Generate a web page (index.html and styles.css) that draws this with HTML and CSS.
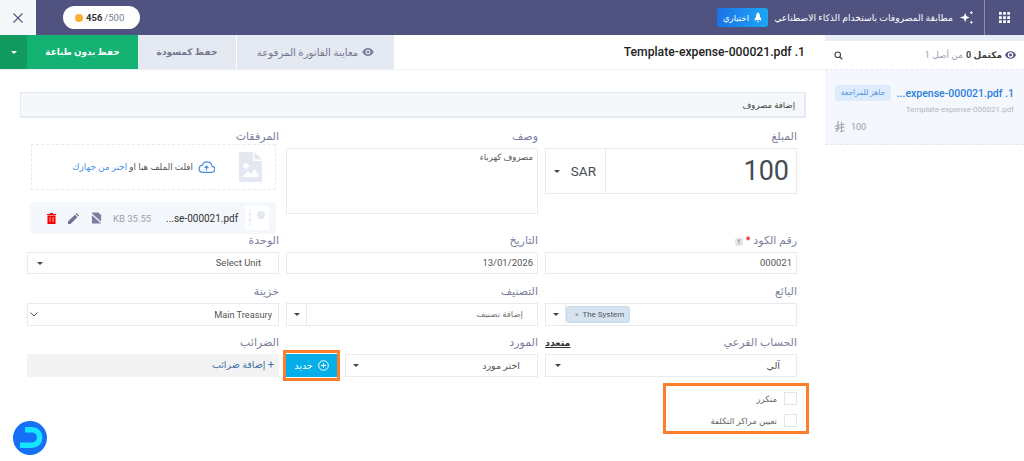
FILE: index.html
```html
<!DOCTYPE html>
<html lang="ar">
<head>
<meta charset="utf-8">
<title>مطابقة المصروفات</title>
<link rel="stylesheet" href="styles.css">
</head>
<body>
<header class="topbar">
  <button class="close-btn" aria-label="close"><svg width="10" height="10" viewBox="0 0 10 10"><path d="M.5.500l9 9M9.500.500l-9 9" stroke="#50527f" stroke-width="1.100" fill="none"/></svg></button>
  <div class="credits"><span class="coin"></span><b>456</b><span class="credits-max">/500</span></div>
  <div class="top-spacer"></div>
  <div class="beta"><span>اختياري</span><svg width="8" height="11" viewBox="0 0 10 13"><path d="M5 0c2 1.500 2.600 3.500 2.600 6l1.400 2v2.500L7 9.500H3L1 10.500V8l1.400-2C2.400 3.500 3 1.500 5 0zM3.800 10.500h2.400L5 13z" fill="#fff"/></svg></div>
  <div class="top-title">مطابقة المصروفات باستخدام الذكاء الاصطناعي</div>
  <svg class="sparkle" width="15" height="15" viewBox="0 0 17 17"><path d="M7 3.500l1.500 3.500L12 8.500 8.500 10 7 14l-1.500-4L1 8.500 5.500 7z" fill="#fff"/><path d="M14 1l.7 1.300L16 3l-1.300.7L14 5l-.7-1.300L12 3l1.300-.7zM14 12l.7 1.300L16 14l-1.300.7L14 16l-.7-1.300L12 14l1.300-.7z" fill="#fff"/></svg>
  <div class="apps"><svg width="11" height="11" viewBox="0 0 12 12" fill="#fff"><path d="M0 0h3v3H0zM4.500 0h3v3h-3zM9 0h3v3H9zM0 4.500h3v3H0zM4.500 4.500h3v3h-3zM9 4.500h3v3H9zM0 9h3v3H0zM4.500 9h3v3h-3zM9 9h3v3H9z"/></svg></div>
</header>

<div class="layout">
  <main class="content">
    <div class="toolbar">
      <button class="btn-caret"><i class="caret caret-white"></i></button>
      <button class="btn-save">حفظ بدون طباعة</button>
      <button class="btn-draft">حفظ كمسودة</button>
      <button class="btn-preview"><span>معاينة الفاتورة المرفوعة</span><svg width="12" height="8" viewBox="0 0 13 9"><path d="M6.500 0C3.500 0 1.200 1.900 0 4.500 1.200 7.100 3.500 9 6.500 9S11.800 7.100 13 4.500C11.800 1.900 9.500 0 6.500 0zm0 7.300a2.800 2.800 0 1 1 0-5.600 2.800 2.800 0 0 1 0 5.600zm0-4.300a1.500 1.500 0 1 0 0 3 1.500 1.500 0 0 0 0-3z" fill="#7b7e9d"/></svg></button>
      <h1 class="doc-title" dir="rtl">1. Template-expense-000021.pdf</h1>
    </div>

    <div class="panel-head">إضافة مصروف</div>

    <form class="form-grid" dir="rtl">
      <div class="field">
        <label>المبلغ</label>
        <div class="amount">
          <div class="amount-value">100</div>
          <div class="amount-cur"><span>SAR</span><i class="caret"></i></div>
        </div>
      </div>
      <div class="field">
        <label>وصف</label>
        <div class="textarea">مصروف كهرباء</div>
      </div>
      <div class="field">
        <label class="label-tight">المرفقات</label>
        <div class="upload">
          <svg class="file-img" width="23" height="30" viewBox="0 0 23 30"><path d="M0 0h14v9h9v21H0z" fill="#e3e8f1"/><path d="M15.500 0L23 7.500h-7.500z" fill="#e3e8f1"/><circle cx="7" cy="14" r="2.800" fill="#fff"/><path d="M3 25l6-6 3 3 4-5 4 8z" fill="#fff"/></svg>
          <svg class="cloud" width="17" height="12" viewBox="0 0 17 12"><path d="M4 11.300h9.500a3 3 0 0 0 .5-6A5 5 0 0 0 4.300 4.200 3.600 3.600 0 0 0 4 11.300zM8.500 9.500V5M6.500 7l2-2 2 2" fill="none" stroke="#4d8fdf" stroke-width="1.200"/></svg>
          <span class="drop-text">افلت الملف هنا او <a>اختر من جهازك</a></span>
        </div>
        <div class="file-row">
          <div class="file-thumb"><svg width="20" height="18" viewBox="0 0 20 18"><path d="M3 1v16M1 5h4M1 11h4" stroke="#e3e8f1" fill="none"/><circle cx="14" cy="6" r="4" fill="#e3e8f1"/></svg></div>
          <span class="file-name" dir="ltr">...se-000021.pdf</span>
          <span class="file-size" dir="ltr">KB 35.55</span>
          <svg class="file-ico" width="11" height="12" viewBox="0 0 12 12"><path d="M1 0h7l3 3v9H1z" fill="#7b7e9d"/><path d="M0 1l12 11" stroke="#f4f7fb" stroke-width="1.500"/></svg>
          <svg class="file-ico" width="11" height="11" viewBox="0 0 12 12"><path d="M0 12V9.300L7.500 1.800l2.700 2.700L2.700 12zM8.300 1l1-1L12 2.700l-1 1z" fill="#6d7196"/></svg>
          <svg class="file-ico" width="9" height="11" viewBox="0 0 9 11"><path d="M0 1h9v1H0zM3 0h3v1H3zM.5 2.500h8V11h-8z" fill="#f40000"/><path d="M3 4v5M6 4v5" stroke="#ffb0b0"/></svg>
        </div>
      </div>

      <div class="field">
        <label>رقم الكود <em>*</em> <span class="hint">؟</span></label>
        <div class="input">000021</div>
      </div>
      <div class="field">
        <label>التاريخ</label>
        <div class="input">13/01/2026</div>
      </div>
      <div class="field">
        <label>الوحدة</label>
        <div class="input input-select pad-unit"><span dir="ltr">Select Unit</span><i class="caret"></i></div>
      </div>

      <div class="field">
        <label>البائع</label>
        <div class="input tall vendor">
          <div class="tag-wrap"><span class="tag" dir="ltr"><small>×</small> The System</span></div>
          <div class="addon"><i class="caret"></i></div>
        </div>
      </div>
      <div class="field">
        <label>التصنيف</label>
        <div class="input tall vendor">
          <div class="placeholder">إضافة تصنيف</div>
          <div class="addon"><i class="caret"></i></div>
        </div>
      </div>
      <div class="field">
        <label>خزينة</label>
        <div class="input tall input-select pad-treasury"><span dir="ltr">Main Treasury</span><svg width="8" height="5" viewBox="0 0 8 5"><path d="M.5.500L4 4 7.500.500" stroke="#555" fill="none"/></svg></div>
      </div>

      <div class="field">
        <div class="label-row"><label>الحساب الفرعي</label><a class="multi">متعدد</a></div>
        <div class="input tall input-select pad-auto"><span>آلي</span><i class="caret"></i></div>
      </div>
      <div class="field">
        <label>المورد</label>
        <div class="supplier-row">
          <div class="input tall input-select pad-supplier"><span>اختر مورد</span><i class="caret"></i></div>
          <div class="new-outline"><button class="btn-new"><span>جديد</span><svg width="11" height="11" viewBox="0 0 11 11"><circle cx="5.500" cy="5.500" r="4.800" fill="none" stroke="#fff"/><path d="M5.500 3v5M3 5.500h5" stroke="#fff"/></svg></button></div>
        </div>
      </div>
      <div class="field">
        <label>الضرائب</label>
        <div class="tax"><span class="plus">+</span> إضافة ضرائب</div>
      </div>
    </form>

    <div class="checks" dir="rtl">
      <label class="check"><i></i><span>متكرر</span></label>
      <label class="check"><i></i><span>تعيين مراكز التكلفة</span></label>
    </div>
  </main>

  <aside class="sidebar">
    <div class="side-strip"></div>
    <div class="side-head">
      <svg width="9" height="9" viewBox="0 0 12 12"><circle cx="5" cy="5" r="3.700" fill="none" stroke="#444" stroke-width="1.500"/><path d="M7.500 7.500L11 11" stroke="#444" stroke-width="1.800"/></svg>
      <div class="side-count" dir="rtl"><svg width="11" height="8" viewBox="0 0 13 9"><path d="M6.500 0C3.500 0 1.200 1.900 0 4.500 1.200 7.100 3.500 9 6.500 9S11.800 7.100 13 4.500C11.800 1.900 9.500 0 6.500 0zm0 7.800a3.300 3.300 0 1 1 0-6.600 3.300 3.300 0 0 1 0 6.600zm0-5a1.700 1.700 0 1 0 0 3.400 1.700 1.700 0 0 0 0-3.400z" fill="#50527f"/></svg> <b>مكتمل 0</b> <span>من أصل 1</span></div>
    </div>
    <div class="side-item">
      <div class="item-top">
        <span class="badge">جاهز للمراجعة</span>
        <span class="item-name" dir="ltr">...expense-000021.pdf .1</span>
      </div>
      <div class="item-file">Template-expense-000021.pdf</div>
      <div class="item-amount"><svg width="10" height="11" viewBox="0 0 10 11"><path d="M3 0v8.500L1 10.500M6.500 1v8.500M0 5l9.500-1.800M0 7.800l9.500-1.800M5 10.700l4.500-1" stroke="#9a9cb0" stroke-width="1.100" fill="none"/></svg><span>100</span></div>
    </div>
  </aside>
</div>

<svg class="logo" width="34" height="34" viewBox="0 0 34 34"><circle cx="17" cy="17" r="17" fill="#1570f5"/><path d="M12 6h7a10.500 10.500 0 0 1 0 21H7v-5.500h12a5 5 0 0 0 0-10h-7z" fill="#14e6ff"/></svg>
</body>
</html>
```

FILE: styles.css
```css
* { box-sizing: border-box; }
html, body { margin: 0; padding: 0; background: #fff; }
body {
  width: 1024px;
  height: 461px;
  overflow: hidden;
  font-family: Roboto, "Noto Sans", "DejaVu Sans", sans-serif;
  font-size: 9px;
  color: #444;
  position: relative;
}
button { font: inherit; border: 0; padding: 0; margin: 0; }
label, h1 { margin: 0; }

.topbar {
  height: 35px;
  background: #50527f;
  display: flex;
  align-items: center;
  color: #fff;
}
.close-btn {
  width: 36px;
  height: 35px;
  background: #f5f8fb;
  display: flex;
  align-items: center;
  justify-content: center;
}
.credits {
  margin-left: 27px;
  width: 77px;
  height: 23px;
  background: #fff;
  border-radius: 12px;
  display: flex;
  align-items: center;
  padding-left: 12px;
  color: #333;
  font-size: 9.500px;
}
.coin { width: 8px; height: 8px; border-radius: 50%; background: #fbb034; margin-right: 3px; }
.credits b { font-weight: 700; }
.credits-max { color: #77798f; margin-left: 2px; }
.top-spacer { flex: 1; }
.beta {
  width: 51px;
  height: 19px;
  border-radius: 3px;
  background: linear-gradient(90deg, #1a73e8, #1da7f5);
  display: flex;
  align-items: center;
  justify-content: center;
  gap: 5px;
  font-size: 8.500px;
  margin-right: 6px;
}
.top-title { font-size: 9.200px; white-space: nowrap; width: 179px; direction: rtl; }
.sparkle { margin-left: 6px; margin-right: 10px; }
.apps {
  width: 40px;
  height: 35px;
  border-left: 1px solid #8d8fac;
  display: flex;
  align-items: center;
  justify-content: center;
}

.layout { display: flex; align-items: flex-start; }
.content { width: 825px; flex: none; }

.toolbar {
  height: 35px;
  display: flex;
  align-items: stretch;
  border-bottom: 1px solid #eef1f5;
  position: relative;
}
.btn-caret { width: 27px; background: #119a60; display: flex; align-items: center; justify-content: center; }
.btn-save { width: 111px; background: #14b374; color: #fff; font-weight: 700; font-size: 8.800px; direction: rtl; }
.btn-draft { width: 98px; margin-right: 1px; background: #e4e9f2; color: #74768f; font-size: 9px; font-weight: 600; direction: rtl; }
.btn-preview {
  width: 157px;
  background: #e4e9f2;
  color: #74768f;
  font-size: 10.200px;
  display: flex;
  align-items: center;
  justify-content: center;
  gap: 4px;
  direction: ltr;
}
.doc-title {
  margin-left: auto;
  margin-right: 20px;
  align-self: center;
  font-size: 12.200px;
  font-weight: 500;
  color: #222;
}

.caret { display: inline-block; width: 0; height: 0; border-left: 3px solid transparent; border-right: 3px solid transparent; border-top: 3px solid #444; }
.caret-white { border-top-color: #fff; border-left-width: 3.500px; border-right-width: 3.500px; border-top-width: 3.500px; }

.panel-head {
  margin: 22px 19px 0 20px;
  height: 26px;
  background: #f5f8fb;
  border: 1px solid #e4e9f1;
  border-width: 1px 2px 2px 1px;
  direction: rtl;
  display: flex;
  align-items: center;
  padding: 0 9px;
  font-size: 8.500px;
  color: #444;
}

.form-grid {
  margin: 12px 28px 0 27px;
  display: grid;
  grid-template-columns: repeat(3, 252px);
  column-gap: 7px;
  grid-template-rows: 104px 51px 51px 41px;
}
.field { min-width: 0; }
.field > label, .label-row {
  display: block;
  height: 16px;
  margin-bottom: 2px;
  font-size: 11px;
  line-height: 13px;
  color: #7b7e9d;
  white-space: nowrap;
}
.label-row { display: flex; justify-content: space-between; }
.multi { color: #333; font-weight: 700; font-size: 9.500px; text-decoration: underline; }
.field > .label-tight { height: 14px; margin-bottom: 0; }
.field em { color: #e00; font-style: normal; }
.hint { display: inline-block; width: 8px; height: 8px; background: #e7e7e7; border-radius: 2px; font-size: 6px; line-height: 8px; text-align: center; color: #555; }

.amount { height: 46px; border: 1px solid #e8eaee; display: flex; }
.amount-value { flex: 1; border-left: 1px solid #e8eaee; font-size: 27px; line-height: 44px; padding: 0 7px; color: #454c53; direction: ltr; text-align: right; }
.amount-cur { width: 59px; display: flex; align-items: center; justify-content: space-between; padding: 0 9px 0 8px; font-size: 13.500px; color: #454c53; }
.textarea { height: 66px; border: 1px solid #e8eaee; padding: 3px 4px; font-size: 8.500px; color: #555; }

.upload {
  width: 245px;
  height: 46px;
  margin-right: 3px;
  border: 1px dashed #e8eaee;
  display: flex;
  align-items: center;
  padding-right: 13px;
}
.cloud { margin-right: 24px; margin-left: 5px; }
.drop-text { font-size: 8.800px; color: #555; }
.drop-text a { color: #4d8fdf; }
.file-row {
  width: 246px;
  height: 32px;
  margin-top: 12px;
  margin-right: 3px;
  background: #f4f7fb;
  border-radius: 3px;
  display: flex;
  align-items: center;
  padding-right: 7px;
}
.file-thumb { width: 24px; height: 24px; background: #fff; border-radius: 2px; display: flex; align-items: center; justify-content: center; margin-left: 12px; flex: none; }
.file-name { font-size: 10px; color: #333; width: 67px; white-space: nowrap; flex: none; }
.file-size { font-size: 9.500px; color: #9c9fb5; width: 38px; margin-right: 15px; margin-left: 11px; white-space: nowrap; flex: none; }
.file-ico { margin-left: 12px; flex: none; }

.input {
  height: 22px;
  border: 1px solid #e8eaee;
  font-size: 9.500px;
  line-height: 20px;
  padding: 0 4px;
  color: #555;
}
.tall { height: 23px; }
.input-select { display: flex; align-items: center; justify-content: space-between; padding-left: 7px; }
.pad-unit { padding-right: 17px; padding-left: 9px; }
.pad-treasury { padding-right: 6px; padding-left: 2px; font-size: 9.200px; }
.pad-auto { padding-right: 16px; padding-left: 9px; }
.pad-supplier { padding-right: 17px; padding-left: 7px; flex: 1; }
.vendor { display: flex; padding: 0; align-items: stretch; }
.tag-wrap { flex: 1; display: flex; align-items: center; justify-content: flex-end; }
.tag { height: 17px; width: 64px; background: #d5e3f0; border: 1px solid #c9d8e8; border-radius: 3px; font-size: 8px; line-height: 15px; color: #555; padding-left: 8px; white-space: nowrap; }
.tag small { color: #777; margin-right: 2px; }
.placeholder { flex: 1; padding: 0 14px; color: #777; font-size: 8.500px; line-height: 21px; }
.addon { width: 20px; border-right: 1px solid #e8eaee; display: flex; align-items: center; justify-content: center; }

.supplier-row { display: flex; align-items: flex-start; gap: 5px; }
.new-outline {
  flex: none;
  margin: -4px 0 0 -3px;
  width: 57px;
  height: 31px;
  border: 3px solid #fd7e2b;
  padding: 1px 0 0 0;
}
.btn-new { width: 51px; height: 23px; background: #03aee9; color: #fff; display: flex; align-items: center; justify-content: center; gap: 5px; font-size: 9.500px; direction: ltr; }
.tax { height: 23px; background: #f3f3f3; font-size: 9.500px; line-height: 22px; color: #3f6fa8; padding-right: 5px; }
.plus { font-size: 11px; }

.checks {
  width: 146px;
  height: 51px;
  margin: 6px 0 0 663px;
  border: 3px solid #fd7e2b;
  padding: 6px 9px;
  display: flex;
  flex-direction: column;
  gap: 9px;
}
.check { display: flex; align-items: center; gap: 7px; height: 13px; font-size: 8.500px; color: #666; white-space: nowrap; }
.check i { width: 13px; height: 13px; border: 1px solid #e3e5ea; flex: none; }

.sidebar { width: 199px; flex: none; background: #fff; }
.side-strip { height: 6px; background: #e9eef6; }
.side-head {
  height: 29px;
  display: flex;
  align-items: center;
  justify-content: space-between;
  padding: 0 8px 0 9px;
  border-bottom: 1px dashed #e3e8f1;
}
.side-count { font-size: 9px; color: #9a9cb0; display: flex; align-items: center; gap: 3px; }
.side-count b { color: #444; font-weight: 700; }
.side-item { height: 75px; background: #f4f7fb; border-bottom: 1px dashed #e3e8f1; padding: 15px 10px 0 10px; }
.item-top { display: flex; align-items: center; gap: 5px; }
.badge { width: 56px; height: 16px; background: #dcecfd; border-radius: 2px; color: #4d8fdf; font-size: 7.500px; line-height: 16px; text-align: center; direction: rtl; flex: none; white-space: nowrap; }
.item-name { color: #2a7de1; font-size: 10.500px; font-weight: 500; white-space: nowrap; text-align: right; flex: 1; min-width: 0; }
.item-file { margin-top: 4px; font-size: 8px; color: #b4b6c4; text-align: right; }
.item-amount { margin-top: 7px; display: flex; align-items: center; gap: 6px; color: #9a9cb0; font-size: 9px; }

.logo { position: absolute; left: 13px; top: 421px; }
```
